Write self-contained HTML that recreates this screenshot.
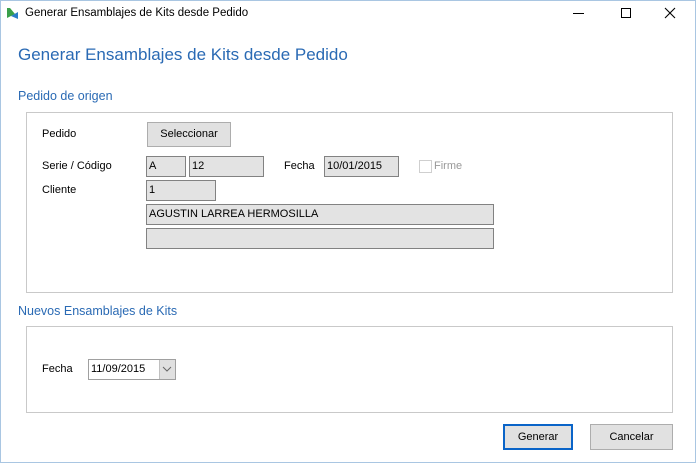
<!DOCTYPE html>
<html><head><meta charset="utf-8"><style>
*{margin:0;padding:0;box-sizing:border-box}
body{width:696px;height:463px;background:#fff;font-family:"Liberation Sans",sans-serif;position:relative;overflow:hidden;font-size:11px;color:#000}
.a{position:absolute}
.win{left:0;top:0;width:696px;height:463px;border:1px solid #a9c6e2}
.panel{border:1px solid #c9c9c9}
.box{background:#e3e3e3;border:1px solid #828282;padding:1px 0 0 2px;font-size:11px;line-height:17px}
.btn{background:#e1e1e1;border:1px solid #adadad;text-align:center;font-size:11px}
.lbl{font-size:11px}
.h{color:#2a6ab4}
</style></head><body>
<div class="a win"></div>
<svg class="a" style="left:5px;top:6px" width="14" height="14" viewBox="0 0 14 14"><path d="M2 2 L5 2 L10 8 L2 12 Z" fill="#3aa04a"/><path d="M6 10 L13 6 L13 13 Z" fill="#2a7cc8"/></svg>
<div class="a" style="left:25px;top:7px;font-size:11.5px">Generar Ensamblajes de Kits desde Pedido</div>
<div class="a" style="left:573px;top:13px;width:11px;height:1px;background:#000"></div>
<div class="a" style="left:621px;top:8px;width:10px;height:10px;border:1px solid #000"></div>
<svg class="a" style="left:664px;top:7px" width="12" height="12"><path d="M1 1 L11 11 M11 1 L1 11" stroke="#000" stroke-width="1.1"/></svg>
<div class="a h" style="left:18px;top:45px;font-size:17px">Generar Ensamblajes de Kits desde Pedido</div>
<div class="a h" style="left:18px;top:89px;font-size:12.5px">Pedido de origen</div>
<div class="a panel" style="left:26px;top:112px;width:647px;height:181px"></div>
<div class="a lbl" style="left:42px;top:128px">Pedido</div>
<div class="a btn" style="left:147px;top:122px;width:84px;height:25px;line-height:23px">Seleccionar</div>
<div class="a lbl" style="left:42px;top:160px">Serie / Código</div>
<div class="a box" style="left:146px;top:156px;width:40px;height:21px">A</div>
<div class="a box" style="left:189px;top:156px;width:75px;height:21px">12</div>
<div class="a lbl" style="left:284px;top:160px">Fecha</div>
<div class="a box" style="left:324px;top:156px;width:75px;height:21px">10/01/2015</div>
<div class="a" style="left:419px;top:160px;width:13px;height:13px;border:1px solid #cfcfcf"></div>
<div class="a lbl" style="left:434px;top:160px;color:#999">Firme</div>
<div class="a lbl" style="left:42px;top:184px">Cliente</div>
<div class="a box" style="left:146px;top:180px;width:70px;height:21px">1</div>
<div class="a box" style="left:146px;top:204px;width:348px;height:21px">AGUSTIN LARREA HERMOSILLA</div>
<div class="a box" style="left:146px;top:228px;width:348px;height:21px"></div>
<div class="a h" style="left:18px;top:304px;font-size:12.5px">Nuevos Ensamblajes de Kits</div>
<div class="a panel" style="left:26px;top:326px;width:647px;height:87px"></div>
<div class="a lbl" style="left:42px;top:363px">Fecha</div>
<div class="a" style="left:88px;top:359px;width:88px;height:21px;border:1px solid #a0a0a0;background:#fff;padding:1px 0 0 2px;line-height:17px">11/09/2015</div>
<div class="a" style="left:159px;top:360px;width:16px;height:19px;background:#e0e0e0;border-left:1px solid #c0c0c0"></div>
<svg class="a" style="left:162px;top:366px" width="10" height="6"><path d="M1 1 L5 5 L9 1" stroke="#666" fill="none"/></svg>
<div class="a btn" style="left:503px;top:424px;width:70px;height:26px;line-height:22px;border:2px solid #0a64c8">Generar</div>
<div class="a btn" style="left:590px;top:424px;width:83px;height:26px;line-height:24px">Cancelar</div>
</body></html>
